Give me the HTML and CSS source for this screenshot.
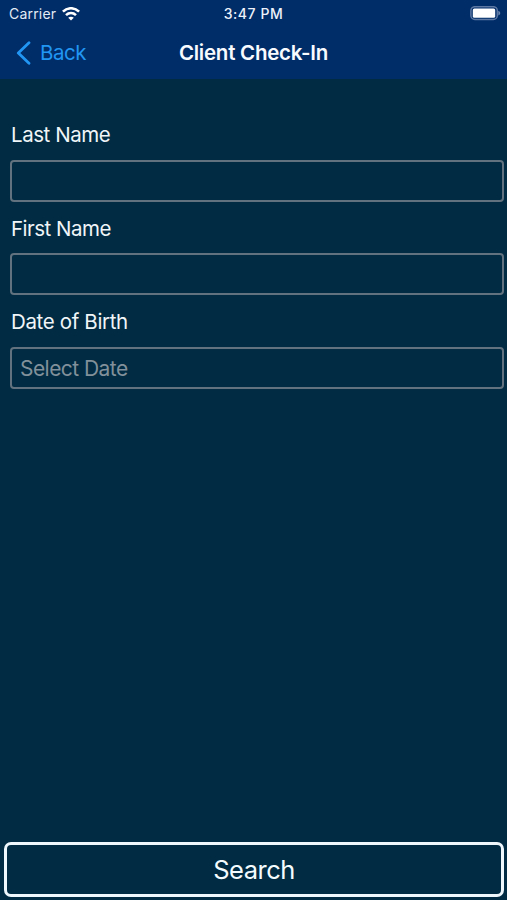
FILE: index.html
```html
<!DOCTYPE html>
<html lang="en">
<head>
<meta charset="utf-8">
<title>Client Check-In</title>
<link rel="stylesheet" href="styles.css">
</head>
<body>
<header class="header">
  <div class="status">
    <div class="carrier"><span class="carrier-name">Carrier</span>
      <svg class="wifi" width="18" height="14" viewBox="0 0 18 14"><g fill="none" stroke="#fff" stroke-width="2.6"><path d="M.9 4.7C5.5.1 12.5.1 17.1 4.7"/><path d="M4 8.1c2.9-2.7 7.1-2.7 10 0"/></g><path d="M9 13.6 6.2 10.7c1.6-1.4 4-1.4 5.6 0z" fill="#fff"/></svg>
    </div>
    <span class="time">3:47 PM</span>
    <svg class="battery" width="31" height="15" viewBox="0 0 31 15"><rect x=".9" y=".7" width="26.4" height="12.8" rx="4" fill="none" stroke="#5d79a3" stroke-width="1.5"/><rect x="2.8" y="2.4" width="22.4" height="9.4" rx="1.6" fill="#fff"/><path d="M28.3 4.7c2.6.9 2.6 3.9 0 4.8z" fill="#6e87ae"/></svg>
  </div>
  <nav class="nav">
    <a class="back"><svg width="15" height="24" viewBox="0 0 15 24"><path d="M13 1.7 2.3 12 13 22.3" fill="none" stroke="#2196f3" stroke-width="2.8" stroke-linecap="round" stroke-linejoin="round"/></svg><span class="back-text">Back</span></a>
    <h1 class="title">Client Check-In</h1>
  </nav>
</header>
<main class="form">
  <label class="label"><span class="last">Last Name</span></label>
  <div class="field"></div>
  <label class="label"><span class="first">First Name</span></label>
  <div class="field"></div>
  <label class="label"><span class="birth">Date of Birth</span></label>
  <div class="field"><span class="placeholder">Select Date</span></div>
</main>
<button class="search"><span class="search-text">Search</span></button>
</body>
</html>
```
FILE: styles.css
```css
* { box-sizing: border-box; }
body {
  margin: 0;
  height: 900px;
  display: flex;
  flex-direction: column;
  overflow: hidden;
  background: #002b42;
  color: #f0f5f8;
  font-family: Inter, sans-serif;
}
.header { height: 79px; background: #002c68; flex: none; }
.status, .nav { display: grid; grid-template-columns: 1fr auto 1fr; align-items: center; }
.status { height: 27px; padding: 0 6px 0 9px; font-size: 14px; }
.carrier { display: flex; align-items: center; gap: 6px; color: #e3ebf5; }
.carrier-name { letter-spacing: .2px; }
.time { font-weight: 500; font-size: 14px; letter-spacing: .55px; margin-right: 3px; color: #edf2fa; }
.battery { justify-self: end; }
.nav { height: 51px; padding: 0 16px; }
.back { display: flex; align-items: center; gap: 9px; color: #2196f3; font-size: 20.5px; letter-spacing: -.5px; }
.title { margin: 0; font-size: 20.5px; font-weight: 600; letter-spacing: -.25px; color: #f8fbff; }
.form { flex: 1; padding: 35px 3px 0 10px; }
.label { display: flex; align-items: center; height: 41px; padding-left: 1px; margin-bottom: 5px; font-size: 20.5px; letter-spacing: -.45px; }
.first { letter-spacing: -.5px; padding-top: 1px; }
.birth { letter-spacing: -.35px; }
.field { height: 42px; margin-bottom: 5.3px; display: flex; align-items: center; padding-left: 8px; border: 2px solid #62727e; border-radius: 4px; font-size: 21px; letter-spacing: -.55px; color: #81909a; }
.placeholder { padding-top: 1px; }
.search { margin: 0 3px 3px 4px; height: 55px; border: 3px solid #eef7fc; border-radius: 7px; background: transparent; color: #f4fbff; font: 400 25.5px Inter, sans-serif; letter-spacing: -.5px; padding: 0; }
```
